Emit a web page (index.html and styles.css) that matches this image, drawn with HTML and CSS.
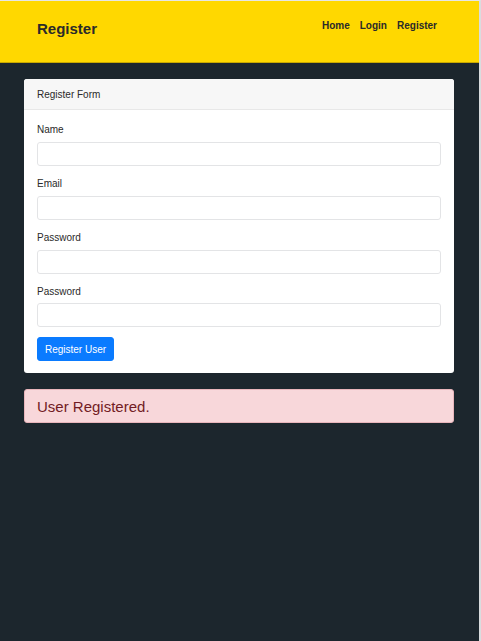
FILE: index.html
```html
<!DOCTYPE html>
<html>
<head>
<meta charset="utf-8">
<link rel="stylesheet" href="styles.css">
</head>
<body>
<div class="page">
  <header class="topbar">
    <div class="brand">Register</div>
    <nav class="nav">
      <a href="#">Home</a>
      <a href="#">Login</a>
      <a href="#">Register</a>
    </nav>
  </header>
  <main class="content">
    <section class="card">
      <div class="card-header">Register Form</div>
      <form class="card-body">
        <label class="label">Name</label>
        <input class="input" type="text">
        <label class="label">Email</label>
        <input class="input" type="text">
        <label class="label">Password</label>
        <input class="input" type="password">
        <label class="label">Password</label>
        <input class="input last" type="password">
        <button class="btn" type="button">Register User</button>
      </form>
    </section>
    <div class="alert">User Registered.</div>
  </main>
</div>
</body>
</html>
```
FILE: styles.css
```css
* { box-sizing: border-box; }
html, body { margin: 0; padding: 0; height: 100%; }
body {
  font-family: "Liberation Sans", Arial, sans-serif;
  background: #1c262d;
  color: #212529;
}
.page {
  min-height: 100%;
  border-top: 1px solid #e6e6e6;
  border-right: 2px solid #d9dcde;
  background: #1c262d;
}
.topbar {
  height: 62px;
  background: #ffd800;
  border-bottom: 1px solid #c9a800;
  display: flex;
  justify-content: space-between;
  align-items: flex-start;
  padding: 0 42px 0 37px;
}
.brand {
  font-size: 15px;
  font-weight: bold;
  color: #2a2a2a;
  margin-top: 19px;
}
.nav {
  display: flex;
  gap: 10px;
  margin-top: 19px;
}
.nav a {
  font-size: 10px;
  font-weight: bold;
  color: #2a2a2a;
  text-decoration: none;
}
.content {
  padding: 16px 25px 0 24px;
}
.card {
  background: #fff;
  border-radius: 3px;
  overflow: hidden;
}
.card-header {
  height: 31px;
  background: #f7f7f7;
  border-bottom: 1px solid #e8e8e8;
  font-size: 10px;
  color: #2a2a2a;
  padding: 0 13px;
  display: flex;
  align-items: center;
}
.card-body {
  display: flex;
  flex-direction: column;
  align-items: flex-start;
  padding: 12px 13px 12px 13px;
  margin: 0;
}
.label {
  font-size: 10px;
  color: #2a2a2a;
  line-height: 16px;
  margin-bottom: 4px;
}
.input {
  width: 100%;
  height: 24px;
  border: 1px solid #e3e4e6;
  border-radius: 3px;
  background: #fff;
  margin: 0 0 10px 0;
  padding: 0 6px;
}
.input.last {
  margin-top: -1px;
}
.btn {
  height: 24px;
  width: 77px;
  padding: 0;
  background: #0a7bff;
  color: #fff;
  border: 1px solid #0a7bff;
  border-radius: 3px;
  font-family: "Liberation Sans", Arial, sans-serif;
  font-size: 10px;
}
.alert {
  margin-top: 16px;
  height: 34px;
  background: #f8d7da;
  border: 1px solid #e8b5bb;
  border-radius: 3px;
  color: #721c24;
  font-size: 15px;
  padding: 0 12px;
  display: flex;
  align-items: center;
}
```
